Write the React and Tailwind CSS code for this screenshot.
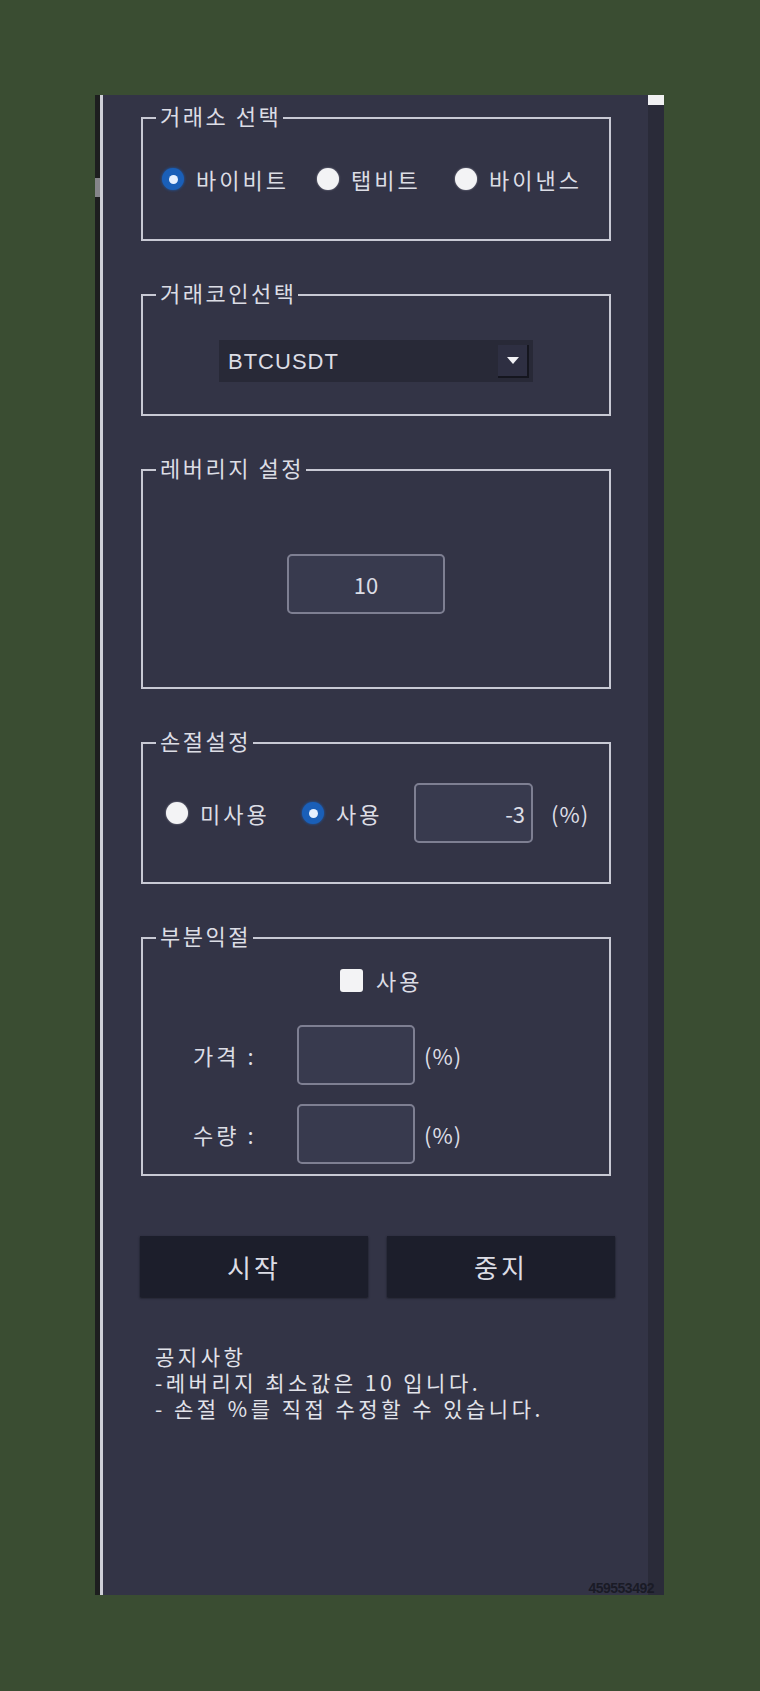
const FONT = "font-['Noto_Sans_CJK_KR','Noto_Sans',sans-serif]"

function Box({ title, className = '', children }) {
  return (
    <div className={`relative w-[470px] border-2 border-[#c8c9d4] ${className}`}>
      <span className="absolute left-[13px] top-[-17px] pl-[4px] pr-[2px] bg-[#333446] text-[22px] leading-[26px] tracking-[2.5px] text-[#dcdde5]">
        {title}
      </span>
      {children}
    </div>
  )
}

function Radio({ checked }) {
  if (checked) {
    return (
      <span className="w-[22px] h-[22px] shrink-0 rounded-full bg-[#1a5fb8] shadow-[0_0_3px_#1a5fb8] flex items-center justify-center">
        <span className="w-[9px] h-[9px] rounded-full bg-[#e6f0ff]" />
      </span>
    )
  }
  return <span className="w-[22px] h-[22px] shrink-0 rounded-full bg-[#f3f3f5] shadow-[0_0_2px_#9a9aa8]" />
}

function Option({ checked, label, className = '' }) {
  return (
    <div className={`flex items-center gap-[12px] ${className}`}>
      <Radio checked={checked} />
      <span className="text-[22px] leading-[26px] tracking-[3px] text-[#dcdde5]">{label}</span>
    </div>
  )
}

function Field({ value = '', align = 'center', className = '' }) {
  return (
    <div
      className={`h-[60px] rounded-[5px] border-2 border-[#7e7f92] bg-[#383a4e] flex items-center text-[22px] text-[#dcdde5] ${
        align === 'right' ? 'justify-end pr-[6px]' : 'justify-center'
      } ${className}`}
    >
      {value}
    </div>
  )
}

export default function App() {
  return (
    <div className={`w-[760px] h-[1691px] bg-[#3a4d32] pt-[95px] pl-[95px] ${FONT}`}>
      <div className="relative w-[569px] h-[1500px] flex bg-[#333446]">
        <div className="w-[5px] bg-[#1d1e1f] flex flex-col">
          <div className="mt-[83px] h-[19px] bg-[#85858a]" />
        </div>
        <div className="w-[3px] bg-[#cfd0d8]" />

        <div className="flex-1 pl-[38px] pt-[22px] flex flex-col">
          <Box title="거래소 선택" className="h-[124px] flex items-center pl-[19px]">
            <Option checked label="바이비트" className="w-[155px]" />
            <Option label="탭비트" className="w-[138px]" />
            <Option label="바이낸스" />
          </Box>

          <Box title="거래코인선택" className="mt-[53px] h-[122px] flex justify-center pt-[44px]">
            <div className="w-[314px] h-[42px] bg-[#282937] flex items-center justify-between pl-[9px] pr-[4px]">
              <span className="font-['Liberation_Sans',sans-serif] text-[22px] tracking-[1px] text-[#dcdde5]">
                BTCUSDT
              </span>
              <div className="w-[31px] h-[33px] bg-[#2e2f42] border-r-2 border-b-2 border-[#15161f] flex items-center justify-center">
                <svg width="12" height="7" viewBox="0 0 12 7">
                  <path d="M0 0h12L6 7z" fill="#f2f2f6" />
                </svg>
              </div>
            </div>
          </Box>

          <Box title="레버리지 설정" className="mt-[53px] h-[220px] pt-[83px] pl-[144px]">
            <Field value="10" className="w-[158px]" />
          </Box>

          <Box title="손절설정" className="mt-[53px] h-[142px] flex items-center pl-[23px]">
            <Option label="미사용" className="w-[136px]" />
            <Option checked label="사용" className="w-[112px]" />
            <Field value="-3" align="right" className="w-[119px] h-[59px]" />
            <span className="ml-[18px] text-[22px] tracking-[1px] text-[#dcdde5]">(%)</span>
          </Box>

          <Box title="부분익절" className="mt-[53px] h-[239px] flex flex-col pt-[28px]">
            <div className="ml-[197px] flex items-center gap-[13px]">
              <span className="w-[23px] h-[23px] rounded-[3px] bg-[#f3f3f5]" />
              <span className="text-[22px] leading-[26px] tracking-[3px] text-[#dcdde5]">사용</span>
            </div>
            <div className="mt-[32px] flex items-center">
              <span className="w-[154px] pl-[50px] text-[22px] tracking-[3px] text-[#dcdde5]">가격 :</span>
              <Field className="w-[118px]" />
              <span className="ml-[9px] text-[22px] tracking-[1px] text-[#dcdde5]">(%)</span>
            </div>
            <div className="mt-[19px] flex items-center">
              <span className="w-[154px] pl-[50px] text-[22px] tracking-[3px] text-[#dcdde5]">수량 :</span>
              <Field className="w-[118px] h-[59px]" />
              <span className="ml-[9px] text-[22px] tracking-[1px] text-[#dcdde5]">(%)</span>
            </div>
          </Box>

          <div className="mt-[60px] ml-[-1px] w-[475px] grid grid-cols-2 gap-[19px]">
            <button className="h-[61px] bg-[#1c1e2b] shadow-[0_1px_2px_#15161f] text-[26px] tracking-[3px] text-[#dcdde5]">
              시작
            </button>
            <button className="h-[61px] bg-[#1c1e2b] shadow-[0_1px_2px_#15161f] text-[26px] tracking-[3px] text-[#dcdde5]">
              중지
            </button>
          </div>

          <div className="mt-[46px] pl-[14px] text-[21px] leading-[26px] tracking-[3.5px] text-[#e2e3ea]">
            <p>공지사항</p>
            <p>-레버리지 최소값은 10 입니다.</p>
            <p>- 손절 %를 직접 수정할 수 있습니다.</p>
          </div>
        </div>

        <div className="w-[16px] bg-[#2a2b39]">
          <div className="h-[10px] bg-[#f0f0f2]" />
        </div>

        <span className="absolute right-[10px] bottom-[0px] font-['Liberation_Sans',sans-serif] font-bold text-[14px] leading-[14px] tracking-[-0.5px] text-[#1a1b26]">
          459553492
        </span>
      </div>
    </div>
  )
}
